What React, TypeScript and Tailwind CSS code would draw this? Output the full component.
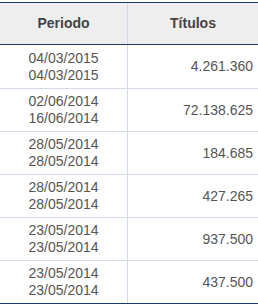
import React from "react";

const rows = [
  { from: "04/03/2015", to: "04/03/2015", titulos: "4.261.360" },
  { from: "02/06/2014", to: "16/06/2014", titulos: "72.138.625" },
  { from: "28/05/2014", to: "28/05/2014", titulos: "184.685" },
  { from: "28/05/2014", to: "28/05/2014", titulos: "427.265" },
  { from: "23/05/2014", to: "23/05/2014", titulos: "937.500" },
  { from: "23/05/2014", to: "23/05/2014", titulos: "437.500" },
];

export default function App() {
  return (
    <div className="w-[258px] h-[304px] bg-white pt-[2px] font-['Liberation_Sans',Arial,sans-serif] text-[14px]">
      <div className="border-t border-b border-[#1c3a6e]">
        {/* header */}
        <div className="grid grid-cols-[128px_130px] h-[42px] bg-[#eeeeee] border-b border-[#1c3a6e]">
          <div className="flex items-center justify-center border-r border-[#d3dbe8] font-bold text-[#444]">
            Periodo
          </div>
          <div className="flex items-center justify-center font-bold text-[#444]">
            Títulos
          </div>
        </div>

        {rows.map((r, idx) => {
          const last = idx === rows.length - 1;
          const height = idx === 0 ? "h-[44px]" : last ? "h-[42px]" : "h-[43px]";
          return (
            <div
              key={idx}
              className={`grid grid-cols-[128px_130px] ${height} ${
                last ? "" : "border-b border-[#d3dbe8]"
              } text-[#555]`}
            >
              <div className="flex flex-col items-center justify-center border-r border-[#d3dbe8] leading-[17px]">
                <span>{r.from}</span>
                <span>{r.to}</span>
              </div>
              <div className="flex items-center justify-end pr-[5px]">{r.titulos}</div>
            </div>
          );
        })}
      </div>
    </div>
  );
}
